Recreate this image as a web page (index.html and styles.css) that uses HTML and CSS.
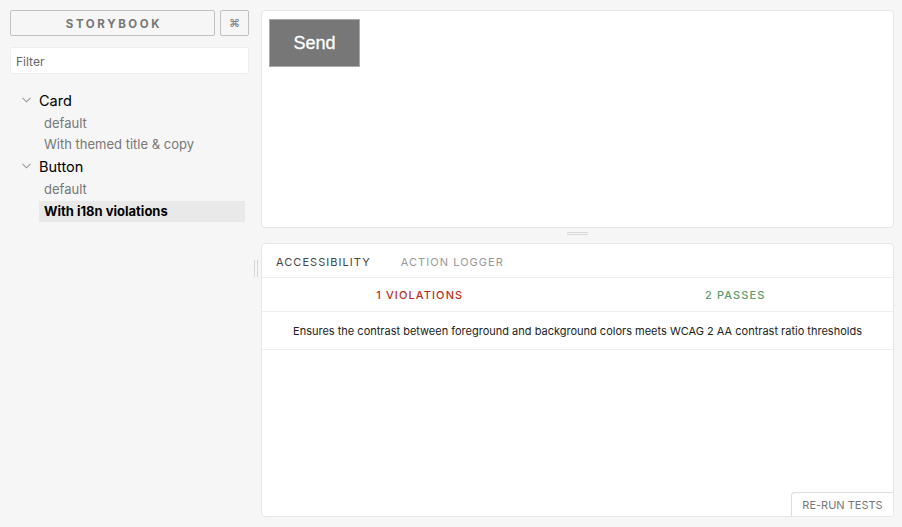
FILE: index.html
```html
<!DOCTYPE html>
<html>
<head>
<meta charset="utf-8">
<link rel="stylesheet" href="styles.css">
</head>
<body>
<div class="app">
  <aside class="sidebar">
    <div class="header">
      <button class="brand">STORYBOOK</button>
      <button class="shortcut">⌘</button>
    </div>
    <input class="filter" placeholder="Filter">
    <ul class="tree">
      <li class="group">
        <div class="group-title"><svg class="chev" width="9" height="6" viewBox="0 0 9 6"><path d="M0.5 0.8 L4.5 4.8 L8.5 0.8" fill="none" stroke="#9a9a9a" stroke-width="1.1"/></svg>Card</div>
        <ul class="stories">
          <li class="story">default</li>
          <li class="story">With themed title &amp; copy</li>
        </ul>
      </li>
      <li class="group">
        <div class="group-title"><svg class="chev" width="9" height="6" viewBox="0 0 9 6"><path d="M0.5 0.8 L4.5 4.8 L8.5 0.8" fill="none" stroke="#9a9a9a" stroke-width="1.1"/></svg>Button</div>
        <ul class="stories">
          <li class="story">default</li>
          <li class="story selected">With i18n violations</li>
        </ul>
      </li>
    </ul>
  </aside>
  <div class="vhandle"><span></span><span></span></div>
  <main class="main">
    <section class="preview">
      <button class="send">Send</button>
    </section>
    <div class="hhandle"><span></span><span></span></div>
    <section class="addons">
      <div class="tabs">
        <div class="tab active">ACCESSIBILITY</div>
        <div class="tab">ACTION LOGGER</div>
      </div>
      <div class="results">
        <div class="res violations">1 VIOLATIONS</div>
        <div class="res passes">2 PASSES</div>
      </div>
      <div class="rule">Ensures the contrast between foreground and background colors meets WCAG 2 AA contrast ratio thresholds</div>
      <div class="spacer"></div>
      <div class="footer"><button class="rerun">RE-RUN TESTS</button></div>
    </section>
  </main>
</div>
</body>
</html>
```
FILE: styles.css
```css
* { box-sizing: border-box; }
html, body { margin: 0; height: 100%; }
body {
  background: #f6f6f6;
  font-family: Inter, Roboto, sans-serif;
  color: #333;
  overflow: hidden;
}
.app {
  display: flex;
  height: 527px;
}
.sidebar {
  width: 250px;
  flex: none;
  padding: 10px 0 0 10px;
}
.header {
  display: flex;
  gap: 5px;
  height: 26px;
}
.brand {
  width: 205px;
  height: 26px;
  border: 1px solid #c1c1c1;
  border-radius: 2px;
  background: #f6f6f6;
  color: #777;
  font-family: Inter, sans-serif;
  font-size: 11.5px;
  font-weight: 700;
  letter-spacing: 2.6px;
  padding: 1px 0 0 3px;
}
.shortcut {
  width: 29px;
  height: 26px;
  border: 1px solid #c1c1c1;
  border-radius: 2px;
  background: #f6f6f6;
  color: #777;
  font-size: 11px;
  padding: 1px 0 0;
}
.filter {
  display: block;
  margin-top: 11px;
  width: 239px;
  height: 27px;
  border: 1px solid #eee;
  border-radius: 2px;
  background: #fff;
  font-family: Inter, sans-serif;
  font-size: 12px;
  padding: 1px 5px 0;
  outline: none;
}
.filter::placeholder { color: #666; }
.tree, .stories {
  list-style: none;
  margin: 0;
  padding: 0;
}
.tree { margin-top: 15px; }
.group-title {
  display: flex;
  align-items: center;
  height: 22px;
  font-size: 14.5px;
  color: #000;
  padding-left: 12px;
}
.chev { margin-right: 8px; margin-top: -1px; }
.stories { padding: 2px 0 0 29px; }
.story {
  height: 21px;
  line-height: 21px;
  font-size: 13px;
  color: #777;
  padding-left: 5px;
  width: 206px;
}
.story.selected {
  background: #e9e9e9;
  color: #000;
  font-weight: 700;
  margin-top: 1px;
}
.vhandle {
  width: 11px;
  flex: none;
  display: flex;
  gap: 2px;
  padding: 260px 0 0 4px;
}
.vhandle span {
  width: 1px;
  height: 17px;
  background: #d8d8d8;
}
.main {
  width: 633px;
  flex: none;
  display: flex;
  flex-direction: column;
  padding-top: 10px;
}
.preview {
  height: 218px;
  background: #fff;
  border: 1px solid #e6e6e6;
  border-radius: 4px;
  padding: 8px 7px;
}
.send {
  width: 91px;
  height: 48px;
  background: #777;
  border: 1px solid #aaa;
  color: #fff;
  font-family: "Liberation Sans", Arial, sans-serif;
  font-size: 18px;
  padding: 0;
  display: block;
  -webkit-text-stroke: 0.3px #fff;
}
.hhandle {
  height: 15px;
  display: flex;
  flex-direction: column;
  align-items: center;
  gap: 1px;
  padding-top: 4px;
}
.hhandle span {
  width: 21px;
  height: 1px;
  background: #d8d8d8;
}
.addons {
  height: 274px;
  background: #fff;
  border: 1px solid #e6e6e6;
  border-radius: 4px;
  display: flex;
  flex-direction: column;
  overflow: hidden;
}
.tabs {
  display: flex;
  height: 34px;
  border-bottom: 1px solid #eee;
  padding: 2px 0 0 14px;
  gap: 30px;
  align-items: center;
}
.tab {
  font-size: 11px;
  letter-spacing: 1.05px;
  color: #999;
}
.tab.active { color: #444; }
.results {
  display: flex;
  height: 34px;
  border-bottom: 1px solid #eee;
  padding-top: 1px;
}
.res {
  flex: 1;
  display: flex;
  align-items: center;
  justify-content: center;
  font-size: 11px;
  font-weight: 500;
  letter-spacing: 1.1px;
}
.violations { color: #b7321c; }
.passes { color: #5e9a6d; }
.rule {
  height: 38px;
  border-bottom: 1px solid #eee;
  display: flex;
  align-items: center;
  justify-content: center;
  font-size: 11px;
  color: #222;
  padding-top: 1px;
}
.spacer { flex: 1; }
.footer {
  display: flex;
  justify-content: flex-end;
}
.rerun {
  width: 102px;
  height: 24px;
  border: 1px solid #ddd;
  border-right: 0;
  border-bottom: 0;
  border-top-left-radius: 4px;
  background: #fff;
  color: #777;
  font-family: Inter, sans-serif;
  font-size: 11px;
  letter-spacing: 0;
  padding: 1px 0 0;
}
```
